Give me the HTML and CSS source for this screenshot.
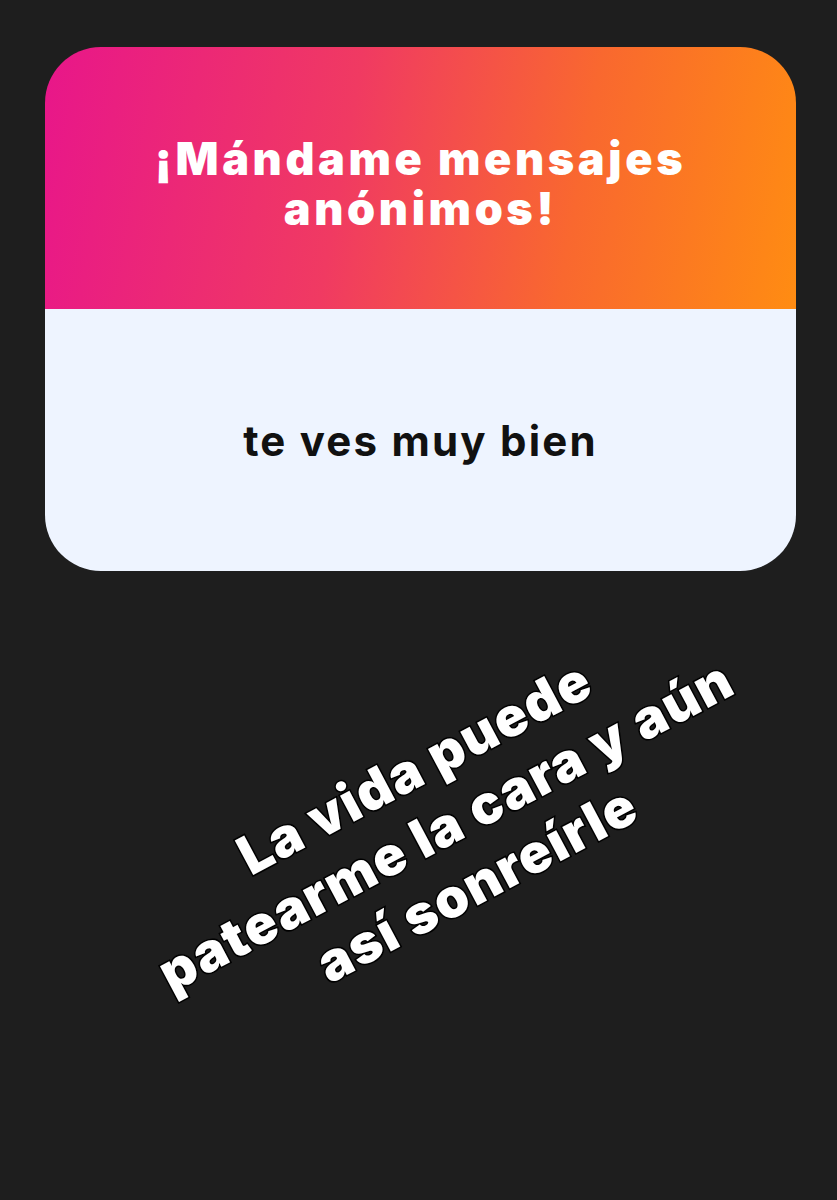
FILE: index.html
```html
<!DOCTYPE html>
<html lang="es">
  <head>
    <meta charset="UTF-8" />
    <meta name="viewport" content="width=device-width, initial-scale=1.0" />
    <title>Mensajes anónimos</title>
    <link rel="stylesheet" href="styles.css">
  </head>
  <body>
    <main class="story">
      <div class="card">
        <div class="card-top">
          <h1>¡Mándame mensajes anónimos!</h1>
        </div>
        <div class="card-bottom">
          <p>te ves muy bien</p>
        </div>
      </div>

      <!-- texto encima -->
      <div class="caption">
        <p>La vida puede<br>patearme la cara y aún<br>así sonreírle</p>
      </div>
    </main>
  </body>
</html>
```

FILE: styles.css
```css
* {
  margin: 0;
  padding: 0;
  box-sizing: border-box;
}
body {
  background-color: #1e1e1e;
  font-family: Inter, "Noto Sans", sans-serif;
  width: 837px;
  height: 1200px;
  overflow: hidden;
}
.story {
  padding: 47px 41px 0 45px;
}
.card {
  width: 751px;
  border-radius: 56px;
  overflow: hidden;
}
.card-top {
  height: 262px;
  background: linear-gradient(100deg, #e8168a 0%, #f03a62 40%, #f9682f 70%, #ff8c12 100%);
  display: flex;
  align-items: center;
  justify-content: center;
  padding: 12px 30px 0;
}
.card-top > h1 {
  color: #fff;
  font-size: 45px;
  font-weight: 900;
  line-height: 50px;
  text-align: center;
  letter-spacing: 3.6px;
  width: 660px;
}
.card-bottom {
  height: 262px;
  background-color: #eef4ff;
  display: flex;
  align-items: center;
  justify-content: center;
}
.card-bottom > p {
  color: #111;
  font-size: 42px;
  font-weight: 700;
  letter-spacing: 2.2px;
}

/* texto girado */
.caption {
  margin-top: 156px;
  display: flex;
  justify-content: center;
}
.caption > p {
  transform: translateX(25px) rotate(-28deg);
  color: #fff;
  font-size: 54px;
  font-weight: 900;
  line-height: 66px;
  text-align: center;
  letter-spacing: 1.5px;
  white-space: nowrap;
  -webkit-text-stroke: 3px #000;
  paint-order: stroke fill;
  text-shadow: 0 0 2px #000;
}
```
